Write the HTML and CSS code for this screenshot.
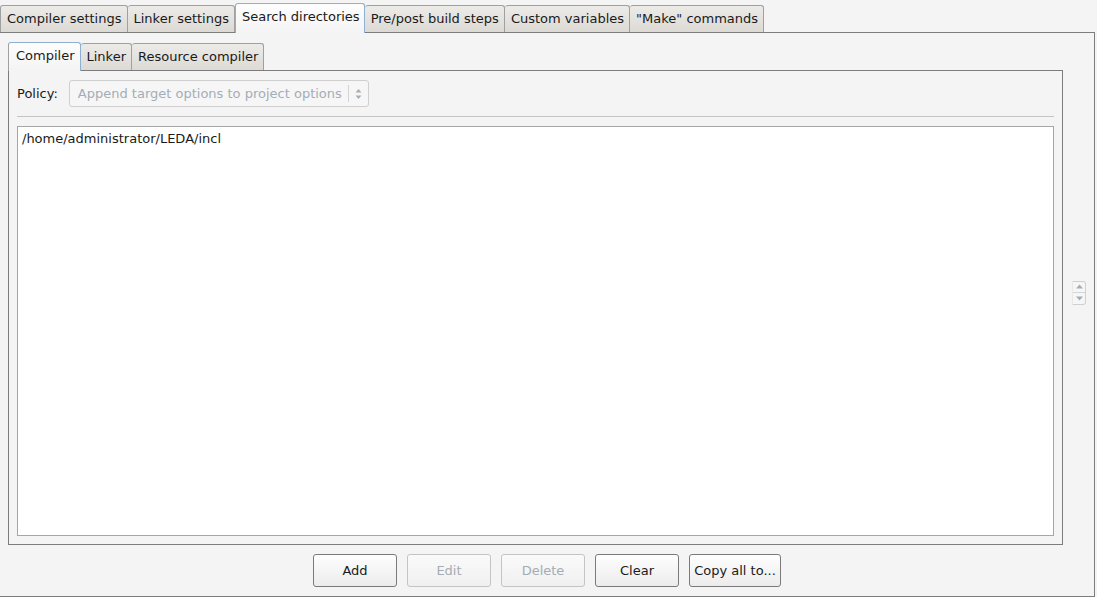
FILE: index.html
```html
<!DOCTYPE html>
<html>
<head>
<meta charset="utf-8">
<link rel="stylesheet" href="styles.css">
</head>
<body>
<div class="window">
  <div class="tabbar">
    <div class="tab">Compiler settings</div>
    <div class="tab">Linker settings</div>
    <div class="tab selected">Search directories</div>
    <div class="tab">Pre/post build steps</div>
    <div class="tab">Custom variables</div>
    <div class="tab">"Make" commands</div>
  </div>
  <div class="pane">
    <div class="main-row">
      <div class="inner">
        <div class="tabbar inner-tabbar">
          <div class="tab selected">Compiler</div>
          <div class="tab">Linker</div>
          <div class="tab">Resource compiler</div>
        </div>
        <div class="inner-pane">
          <div class="policy-row">
            <span class="label">Policy:</span>
            <div class="combo">
              <span class="combo-text">Append target options to project options</span>
              <span class="combo-arrows">
                <svg width="7" height="12" viewBox="0 0 7 12"><path d="M0.5 4.5 L3.5 1 L6.5 4.5 Z" fill="#a4adb6"/><path d="M0.5 7.5 L3.5 11 L6.5 7.5 Z" fill="#a4adb6"/></svg>
              </span>
            </div>
          </div>
          <div class="separator"></div>
          <div class="listbox">
            <div class="item">/home/administrator/LEDA/incl</div>
          </div>
        </div>
      </div>
      <div class="side">
        <div class="spinner">
          <div class="spin-half"><svg width="7" height="5" viewBox="0 0 7 5"><path d="M0 4.5 L3.5 0.5 L7 4.5 Z" fill="#a4adb6"/></svg></div>
          <div class="spin-half lower"><svg width="7" height="5" viewBox="0 0 7 5"><path d="M0 0.5 L3.5 4.5 L7 0.5 Z" fill="#a4adb6"/></svg></div>
        </div>
      </div>
    </div>
    <div class="buttons">
      <button class="btn">Add</button>
      <button class="btn disabled">Edit</button>
      <button class="btn disabled">Delete</button>
      <button class="btn">Clear</button>
      <button class="btn wide">Copy all to...</button>
    </div>
  </div>
</div>
</body>
</html>
```

FILE: styles.css
```css
* { box-sizing: border-box; }
html, body {
  margin: 0;
  padding: 0;
  background: #f4f4f4;
  font-family: "DejaVu Sans", "Liberation Sans", sans-serif;
  font-size: 13px;
  color: #1a1a1a;
}
.window {
  width: 1095px;
  height: 597px;
  display: flex;
  flex-direction: column;
}
.tabbar {
  display: flex;
  align-items: flex-end;
  height: 32px;
}
.tab {
  height: 27px;
  padding: 0 5px 2px 6px;
  display: flex;
  align-items: center;
  border: 1px solid #a0a0a0;
  border-bottom: none;
  border-left: none;
  border-radius: 3px 3px 0 0;
  background: linear-gradient(#ecebe8, #dddad5);
  white-space: nowrap;
}
.tabbar > .tab:first-child { border-left: 1px solid #a0a0a0; }
.tab.selected {
  height: 30px;
  margin-bottom: -1px;
  position: relative;
  border: 1px solid #8fb0d0;
  border-bottom: none;
  background: linear-gradient(#fdfdfd, #f4f4f4);
  padding: 0 4px 5px 6px;
}
.pane {
  flex: 1;
  border: 1px solid #7c7c7c;
  border-left: none;
  display: flex;
  flex-direction: column;
  padding: 9px 31px 9px 8px;
}
.main-row {
  flex: 1;
  display: flex;
}
.inner {
  flex: 1;
  display: flex;
  flex-direction: column;
}
.inner-tabbar {
  height: 28px;
}
.inner-tabbar .tab {
  height: 27px;
  padding: 0 5px 1px 6px;
}
.inner-tabbar .tab.selected {
  height: 29px;
  padding: 0 5px 3px 7px;
}
.inner-pane {
  flex: 1;
  border: 1px solid #7c7c7c;
  display: flex;
  flex-direction: column;
  padding: 9px 8px 8px 8px;
}
.policy-row {
  display: flex;
  align-items: center;
  gap: 11px;
  height: 27px;
}
.label { padding-bottom: 1px; }
.combo {
  width: 300px;
  height: 27px;
  border: 1px solid #cfcfcf;
  border-radius: 3px;
  display: flex;
  align-items: center;
  padding-left: 8px;
  background: #f6f6f6;
}
.combo-text {
  flex: 1;
  color: #a4adb6;
  white-space: nowrap;
}
.combo-arrows {
  width: 20px;
  height: 17px;
  border-left: 1px solid #d4d4d4;
  display: flex;
  align-items: center;
  justify-content: center;
}
.separator {
  height: 1px;
  background: #c4c4c4;
  margin: 9px 0 9px 0;
}
.listbox {
  flex: 1;
  background: #ffffff;
  border: 1px solid #a6a6a6;
  padding: 3px 4px;
}
.item {
  line-height: 18px;
}
.side {
  width: 0;
  display: flex;
  align-items: center;
}
.spinner {
  flex-shrink: 0;
  margin-left: 9px;
  margin-top: -2px;
  width: 14px;
  height: 24px;
  border: 1px solid #d0d0d0;
  border-left-color: #e8e8e8;
  border-radius: 0 3px 3px 0;
  display: flex;
  flex-direction: column;
  background: #f6f6f6;
}
.spin-half {
  flex: 1;
  display: flex;
  align-items: center;
  justify-content: center;
}
.spin-half.lower { border-top: 1px solid #d4d4d4; }
.buttons {
  display: flex;
  justify-content: center;
  gap: 10px;
  padding-top: 9px;
  padding-left: 23px;
  height: 42px;
}
.btn {
  width: 84px;
  height: 33px;
  font-family: inherit;
  font-size: 13px;
  color: #1a1a1a;
  border: 1px solid #7a7a7a;
  border-radius: 3px;
  background: linear-gradient(#fefefe, #ececec);
  padding: 0;
}
.btn.disabled {
  color: #a4adb6;
  border-color: #c4c4c4;
  background: linear-gradient(#fafafa, #f0f0f0);
}
.btn.wide { width: 92px; }
```
